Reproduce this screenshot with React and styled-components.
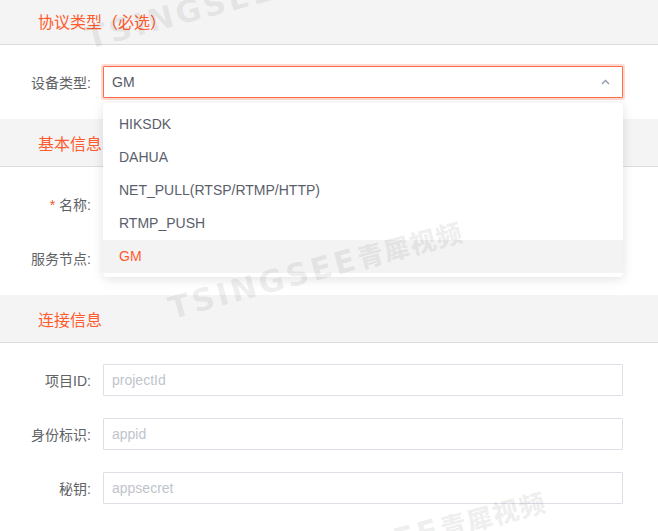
import React from 'react';
import styled, { createGlobalStyle } from 'styled-components';

const ORANGE = '#ff5b2e';
const LABEL = '#606266';

const sections = [
  {
    title: '协议类型（必选）',
    rows: [{ label: '设备类型', select: 'GM' }],
  },
  {
    title: '基本信息',
    rows: [
      { label: '名称', required: true, placeholder: '' },
      { label: '服务节点', placeholder: '' },
    ],
  },
  {
    title: '连接信息',
    rows: [
      { label: '项目ID', placeholder: 'projectId' },
      { label: '身份标识', placeholder: 'appid' },
      { label: '秘钥', placeholder: 'appsecret' },
    ],
  },
];

const options = ['HIKSDK', 'DAHUA', 'NET_PULL(RTSP/RTMP/HTTP)', 'RTMP_PUSH', 'GM'];

// watermark tiles, bottom-left corner of the "T"
const marks = [
  { x: 90, y: 56 },
  { x: 173, y: 326 },
  { x: 256, y: 596 },
];

const Chevron = () => (
  <svg width="9" height="6" viewBox="0 0 9 6">
    <polyline points="1,5 4.5,1.5 8,5" fill="none" stroke="#8f99aa" strokeWidth="1.3" />
  </svg>
);

const DeviceSelect = ({ value }) => (
  <SelectWrap>
    <SelectBox>
      <SelectValue>{value}</SelectValue>
      <Chevron />
    </SelectBox>
    <Dropdown>
      {options.map(o => (
        <Option key={o} active={o === value}>{o}</Option>
      ))}
    </Dropdown>
  </SelectWrap>
);

const App = () => (
  <>
    <GlobalStyle />
    <Page>
      {sections.map(s => (
        <section key={s.title}>
          <SectionHeader>{s.title}</SectionHeader>
          <SectionBody>
            {s.rows.map(r => (
              <FormItem key={r.label}>
                <Label>
                  {r.required && <Star>*</Star>}
                  {r.label}:
                </Label>
                {r.select ? (
                  <DeviceSelect value={r.select} />
                ) : (
                  <Input placeholder={r.placeholder} readOnly />
                )}
              </FormItem>
            ))}
          </SectionBody>
        </section>
      ))}
      <Watermarks>
        {marks.map(m => (
          <Mark key={m.y} x={m.x} y={m.y}>
            <MarkLatin>TSINGSEE</MarkLatin>
            <MarkCjk>青犀视频</MarkCjk>
          </Mark>
        ))}
      </Watermarks>
    </Page>
  </>
);

const GlobalStyle = createGlobalStyle`
  html, body {
    margin: 0;
    background: #fff;
    overflow: hidden;
  }
  body {
    font-family: "Liberation Sans", "Noto Sans CJK SC", sans-serif;
    font-size: 14px;
  }
`;

const Page = styled.div`
  position: relative;
  margin-top: -3px;
  height: 534px;
  overflow: hidden;
`;

const SectionHeader = styled.div`
  height: 47px;
  display: flex;
  align-items: center;
  padding-left: 38px;
  background: #f4f4f4;
  border-bottom: 1px solid #dcdcdc;
  color: ${ORANGE};
  font-size: 16px;
  font-family: "Noto Sans CJK SC", sans-serif;
`;

const SectionBody = styled.div`
  display: flex;
  flex-direction: column;
  gap: 22px;
  padding: 21px 35px 21px 0;
`;

const FormItem = styled.div`
  display: flex;
  align-items: center;
  height: 32px;
`;

const Label = styled.label`
  flex: 0 0 103px;
  box-sizing: border-box;
  padding-right: 12px;
  text-align: right;
  color: ${LABEL};
  font-size: 14px;
`;

const Star = styled.span`
  color: #f2552c;
  margin-right: 4px;
`;

const Input = styled.input`
  flex: 1;
  height: 32px;
  box-sizing: border-box;
  border: 1px solid #dcdfe6;
  border-radius: 1px;
  padding: 0 8px;
  font: inherit;
  font-size: 14px;
  color: ${LABEL};
  outline: none;
  &::placeholder {
    color: #c0c4cc;
  }
`;

const SelectWrap = styled.div`
  position: relative;
  flex: 1;
  z-index: 5;
`;

const SelectBox = styled.div`
  height: 32px;
  box-sizing: border-box;
  display: flex;
  align-items: center;
  justify-content: space-between;
  padding: 0 12px 0 8px;
  border: 1px solid #ff6c4a;
  border-radius: 1px;
  box-shadow: 0 0 0 2px rgba(255, 108, 74, 0.25);
`;

const SelectValue = styled.span`
  color: #555a66;
  font-size: 14px;
`;

const Dropdown = styled.ul`
  position: absolute;
  top: calc(100% + 5px);
  left: 0;
  right: 0;
  margin: 0;
  padding: 5px 0 4px;
  list-style: none;
  background: #fff;
  border-radius: 4px;
  box-shadow: 0 2px 12px rgba(0, 0, 0, 0.12);
`;

const Option = styled.li`
  height: 33px;
  line-height: 33px;
  padding-left: 16px;
  font-size: 14px;
  color: ${p => (p.active ? ORANGE : '#5a5e6b')};
  background: ${p => (p.active ? '#f3f3f3' : 'transparent')};
`;

const Watermarks = styled.div`
  position: absolute;
  inset: 0;
  pointer-events: none;
  z-index: 20;
`;

const Mark = styled.div`
  position: absolute;
  left: ${p => p.x}px;
  top: ${p => p.y - 30}px;
  height: 30px;
  line-height: 30px;
  white-space: nowrap;
  transform-origin: 0 100%;
  transform: rotate(-15deg);
  color: rgba(0, 0, 0, 0.075);
  font-weight: bold;
`;

const MarkLatin = styled.span`
  font-family: "DejaVu Sans", sans-serif;
  font-size: 31px;
  letter-spacing: 3px;
`;

const MarkCjk = styled.span`
  font-family: "Noto Sans CJK SC", sans-serif;
  font-weight: 900;
  font-size: 26px;
  letter-spacing: 1px;
`;

export default App;
